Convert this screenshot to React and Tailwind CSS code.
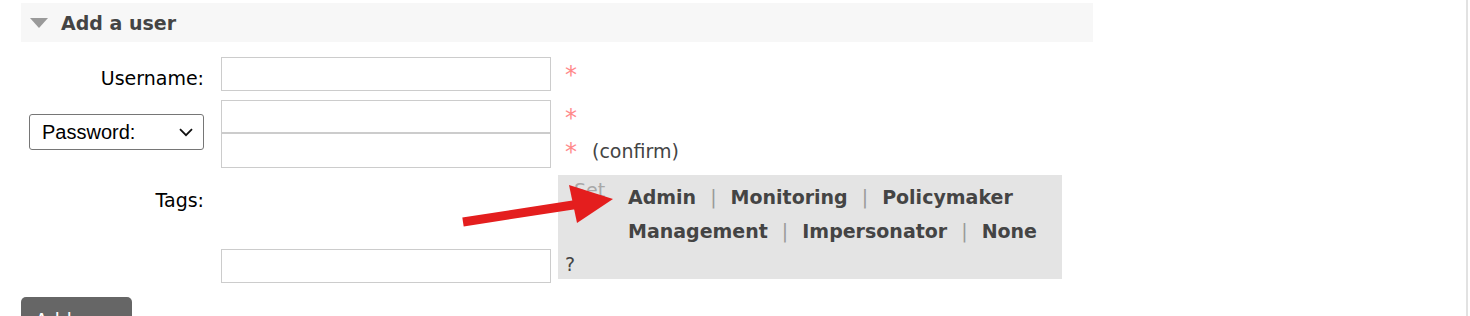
import React from "react";

const tagRows = [
  ["Admin", "Monitoring", "Policymaker"],
  ["Management", "Impersonator", "None"],
];

function Star() {
  return <span className="text-[24px] leading-none text-[#ff8a8a] mt-[2px]">*</span>;
}

export default function App() {
  return (
    <div className="relative flex w-[1470px] h-[316px] overflow-hidden bg-white font-['DejaVu_Sans',sans-serif] text-[19px] text-[#444]">
      <div className="flex-1 pl-[21px] pt-[3px]">
        {/* Section header */}
        <div className="w-[1072px] h-[39px] bg-[#f7f7f7] flex items-center">
          <svg width="18" height="10" viewBox="0 0 18 10" className="ml-[9px]">
            <polygon points="0,0 18,0 9,10" fill="#9a9a9a" />
          </svg>
          <h2 className="ml-[13px] font-bold leading-[22px] text-[#444]">Add a user</h2>
        </div>

        {/* Username */}
        <div className="flex mt-[15px]">
          <label className="w-[183px] text-right pt-[10px] leading-[22px] text-black">Username:</label>
          <div className="ml-[17px] w-[330px] h-[34px] border border-[#ccc] bg-white" />
          <div className="ml-[14px] h-[34px] flex items-center">
            <Star />
          </div>
        </div>

        {/* Password */}
        <div className="flex items-center mt-[9px]">
          <div className="ml-[8px] mb-[4px] w-[175px] h-[36px] border border-[#767676] rounded-[3px] flex items-center justify-between pl-[12px] pr-[10px] font-['Liberation_Sans',sans-serif] text-[20px] text-black">
            <span>Password:</span>
            <svg width="14" height="9" viewBox="0 0 14 9">
              <path d="M1 1.2 L7 7.2 L13 1.2" fill="none" stroke="#111" strokeWidth="1.8" />
            </svg>
          </div>
          <div className="ml-[17px] flex flex-col w-[330px]">
            <div className="h-[33px] border border-[#ccc] bg-white" />
            <div className="h-[35px] border border-[#ccc] bg-white" />
          </div>
          <div className="ml-[14px] flex flex-col">
            <div className="h-[33px] flex items-center">
              <Star />
            </div>
            <div className="h-[35px] flex items-center">
              <Star />
              <span className="ml-[15px] leading-[22px] text-[#444]">(confirm)</span>
            </div>
          </div>
        </div>

        {/* Tags */}
        <div className="flex items-start mt-[7px]">
          <label className="w-[183px] text-right pt-[14px] leading-[22px] text-black">Tags:</label>
          <div className="ml-[17px] w-[330px] h-[108px] flex flex-col justify-end">
            <div className="h-[34px] border border-[#ccc] bg-white" />
          </div>
          <div className="ml-[7px] w-[504px] h-[104px] bg-[#e4e4e4] flex">
            <div className="w-[70px] flex flex-col justify-between pt-[4px] pb-[4px] leading-[22px]">
              <span className="pl-[16px] text-[#a8a8a8]">Set</span>
              <span className="pl-[7px] text-[#444]">?</span>
            </div>
            <div className="pt-[5px] leading-[34px]">
              {tagRows.map((row, i) => (
                <div key={i} className="flex">
                  {row.map((t, j) => (
                    <React.Fragment key={t}>
                      {j > 0 && <span className="px-[14px] text-[#9a9a9a]">|</span>}
                      <span className="font-bold text-[#444]">{t}</span>
                    </React.Fragment>
                  ))}
                </div>
              ))}
            </div>
          </div>
        </div>

        {/* Submit */}
        <button className="mt-[14px] w-[111px] bg-[#666] rounded-[5px] text-left pl-[14px] pt-[11px] pb-[11px] leading-[24px] text-white">
          Add user
        </button>
      </div>

      {/* right edge line */}
      <div className="w-[2px] h-full bg-[#e2e2e2]" />
      <div className="w-[2px] h-full" />

      {/* red annotation arrow */}
      <svg className="absolute left-0 top-0 pointer-events-none" width="1470" height="316" viewBox="0 0 1470 316">
        <line x1="463" y1="222" x2="586" y2="203" stroke="#e41e1e" strokeWidth="9" />
        <polygon points="569,185 613,199 577,223" fill="#e41e1e" />
      </svg>
    </div>
  );
}
